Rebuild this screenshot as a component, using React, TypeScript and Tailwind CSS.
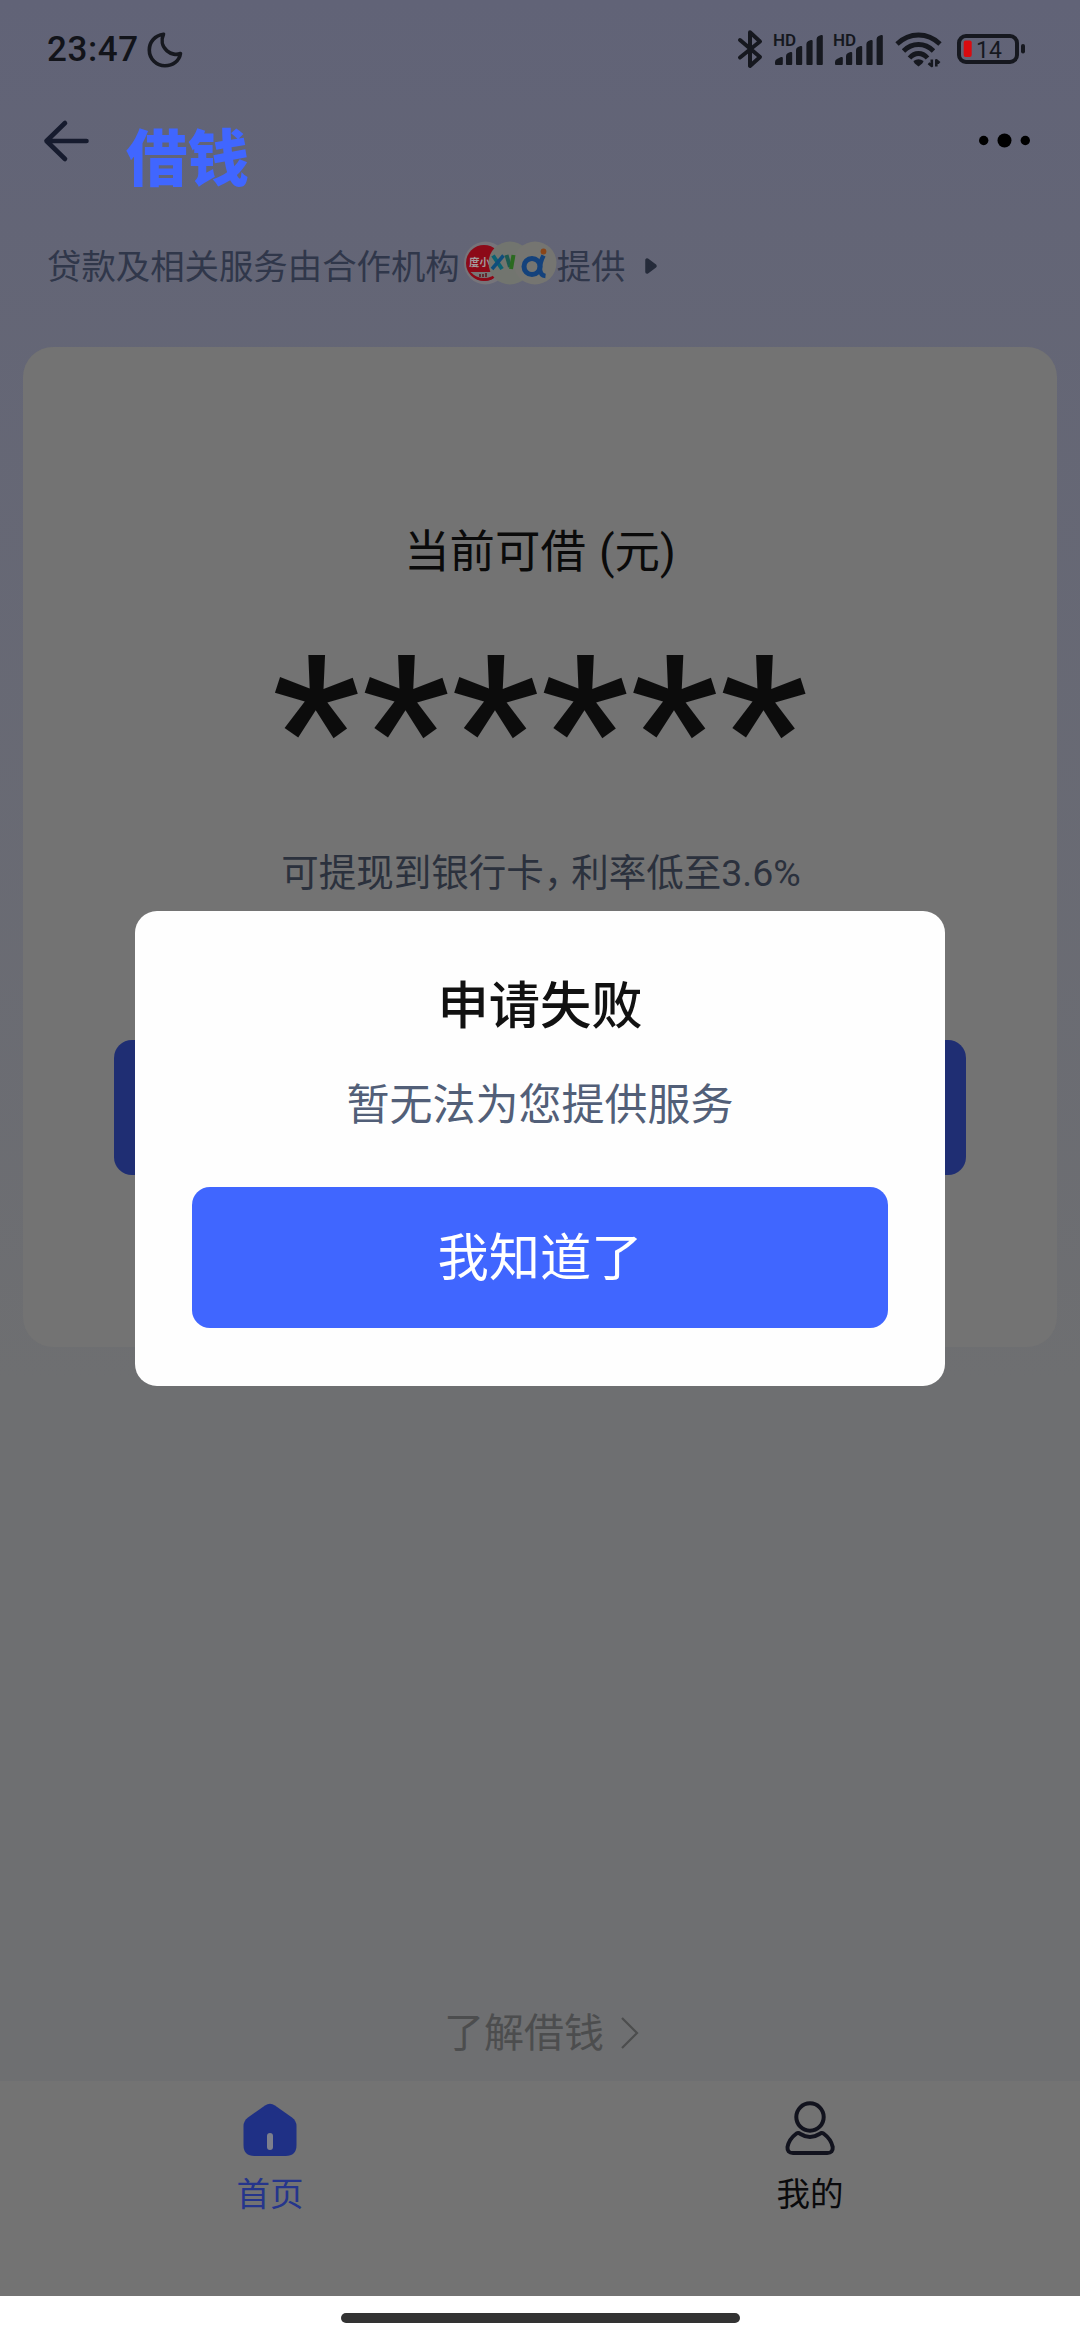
import React from "react";

const cjk = "font-['Roboto','Noto_Sans_CJK_SC',sans-serif]";

function SignalIcon() {
  return (
    <svg width="50" height="36" viewBox="0 0 50 36" fill="#16181f">
      <path d="M2 33v-2q0-2 2-3l4-2q1.800-.5 1.800 1v6q0 1-1 1H3q-1 0-1-1z" />
      <path d="M13 33v-8q0-2 2-3l2.500-1q1.700-.5 1.700 1v11q0 1-1 1H14q-1 0-1-1z" />
      <path d="M23 33v-14q0-2 2-3l2.500-1q1.700-.5 1.700 1v17q0 1-1 1H24q-1 0-1-1z" />
      <path d="M33.400 33v-20q0-2 2-3l2.500-1q1.700-.5 1.700 1v23q0 1-1 1h-4.200q-1 0-1-1z" />
      <path d="M43.600 33v-25q0-2 2-3l2.500-1q1.700-.5 1.700 1v28q0 1-1 1h-4.200q-1 0-1-1z" />
    </svg>
  );
}

function Signal() {
  return (
    <div className="relative w-[50px] h-[36px]">
      <SignalIcon />
      <span className="absolute left-0 top-[1px] font-['Roboto'] text-[17px] leading-[16px] font-semibold text-[#16181f]">
        HD
      </span>
    </div>
  );
}

function StatusBar() {
  return (
    <div className="flex h-[100px] items-start justify-between pl-[47px] pr-[54px]">
      <div className="flex items-start">
        <span className="mt-[29px] font-['Roboto'] text-[35px] leading-[41px] font-medium text-[#12141a] tracking-[0.6px]">
          23:47
        </span>
        <svg
          className="ml-[7px] mt-[30px]"
          width="38"
          height="38"
          viewBox="0 0 38 38"
          fill="none"
          stroke="#16181f"
          strokeWidth="3.6"
          strokeLinejoin="round"
        >
          <path d="M17.500 4.200C9 5.200 3.300 12 3.300 20c0 9 7.200 15.800 15.700 15.800 8 0 14.300-5 15.500-12.300-3.800 1.600-9.500 1-13.500-2.600-5-4.500-6.200-11-3.500-16.700z" />
        </svg>
      </div>
      <div className="flex items-start pt-[29px]">
        <svg
          width="26"
          height="40"
          viewBox="0 0 26 40"
          fill="none"
          stroke="#16181f"
          strokeWidth="4"
          strokeLinejoin="round"
          strokeLinecap="round"
        >
          <path d="M3 11l20 17-10 9V3.300l10 9.200L3 28.500" />
        </svg>
        <div className="ml-[10px] mt-[2px]">
          <Signal />
        </div>
        <div className="ml-[10px] mt-[2px]">
          <Signal />
        </div>
        <svg
          className="ml-[12px] mt-[2px]"
          width="50"
          height="38"
          viewBox="0 0 50 38"
          fill="none"
          stroke="#16181f"
          strokeWidth="4.800"
        >
          <path d="M2 13Q11.500 4 23.500 4T45 13" />
          <path d="M8.500 20Q15 13.500 23.500 13.500T38.500 20" />
          <path d="M14.500 27Q18.500 22.500 23.500 22.500T32.500 27" />
          <path d="M18.500 30q5-3.500 10 0 0 2-5 5.500-5-3.500-5-5.500z" fill="#16181f" stroke="none" />
          <path
            d="M36.800 28.500v6.500l-3.300-2.700M41.300 35.500v-6.300l3.300 2.700"
            strokeWidth="2.600"
            strokeLinejoin="round"
          />
        </svg>
        <svg className="ml-[11px] mt-[4px]" width="70" height="32" viewBox="0 0 70 32">
          <rect
            x="3"
            y="3"
            width="58"
            height="26"
            rx="7"
            fill="none"
            stroke="#16181f"
            strokeWidth="4"
          />
          <rect x="7.700" y="7.500" width="8" height="16.500" rx="2" fill="#da0b10" />
          <rect x="65" y="11" width="4" height="9.500" rx="2" fill="#16181f" />
          <text x="20" y="24.500" fontFamily="Roboto" fontSize="23" fill="#16181f">
            14
          </text>
        </svg>
      </div>
    </div>
  );
}

function Header() {
  return (
    <div className="flex h-[124px] items-start">
      <svg
        className="ml-[42px] mt-[19px]"
        width="50"
        height="44"
        viewBox="0 0 50 44"
        fill="none"
        stroke="#161b2e"
        strokeWidth="4.600"
        strokeLinecap="round"
        strokeLinejoin="round"
      >
        <path d="M44.500 22H4.500M23 4L4.500 22L23 40" />
      </svg>
      <h1
        className={`${cjk} ml-[34px] mt-[27px] text-[61.500px] leading-[66px] font-black text-[#4066ff]`}
      >
        借钱
      </h1>
      <svg className="ml-auto mr-[48px] mt-[32px]" width="54" height="18" viewBox="0 0 54 18">
        <circle cx="5.700" cy="8.500" r="4.700" />
        <circle cx="26.500" cy="8.500" r="7" />
        <circle cx="47.300" cy="8.500" r="4.700" />
      </svg>
    </div>
  );
}

function Providers() {
  return (
    <div
      className={`${cjk} flex h-[84px] items-center pl-[47px] pt-[2px] text-[34.400px] leading-[82px] text-[#30374a] whitespace-nowrap`}
    >
      贷款及相关服务由合作机构
      <svg className="ml-[3px] mb-[8px]" width="94" height="46" viewBox="0 0 94 46">
        <circle cx="22.500" cy="23" r="21.500" fill="#76747a" />
        <circle cx="21" cy="23" r="18" fill="#8c0a18" />
        <path d="M7.500 32h27a18 18 0 0 1-27 0z" fill="#777" />
        <path d="M8 33.500a18 18 0 0 0 22 4.500" fill="none" stroke="#8c0a18" strokeWidth="1.500" />
        <path d="M17 37v-3M20 37v-3M23 37v-4" stroke="#601018" strokeWidth="1.500" />
        <text
          x="6"
          y="25.500"
          fontFamily="Noto Sans CJK SC"
          fontSize="10.500"
          fontWeight="700"
          fill="#a39a9c"
        >
          度小
        </text>
        <circle cx="47" cy="23" r="21.500" fill="#72756f" />
        <circle cx="72" cy="23" r="21.500" fill="#757571" />
        <path d="M30 15.500l9 13.500" stroke="#0b6272" strokeWidth="4" />
        <path d="M40.500 15.500L29 29" stroke="#0f4d7c" strokeWidth="3.500" />
        <path d="M43.500 15l3.500 12" stroke="#1d5a50" strokeWidth="4" />
        <path d="M50.500 15l-2.500 14" stroke="#2b6a20" strokeWidth="4" />
        <circle cx="69" cy="26.500" r="8" fill="none" stroke="#14427c" strokeWidth="5" />
        <path
          d="M80.500 15.500q-4 8-3.500 14t5.500 6.500"
          fill="none"
          stroke="#14427c"
          strokeWidth="4.500"
        />
        <circle cx="80.500" cy="11.500" r="2.900" fill="#8a4518" />
      </svg>
      提供
      <svg className="ml-[17px] mb-[2px]" width="16" height="20" viewBox="0 0 16 20">
        <path
          d="M4 4v12l8-6z"
          fill="#252b3a"
          stroke="#252b3a"
          strokeWidth="3.500"
          strokeLinejoin="round"
        />
      </svg>
    </div>
  );
}

function LoanCard() {
  return (
    <div
      className={`${cjk} mx-[23px] mt-[39px] flex h-[1000px] flex-col items-center rounded-[30px] bg-[#737373]`}
    >
      <p className="mt-[173px] text-[45.400px] leading-[66px] text-[#0a0a0a] [word-spacing:2px]">
        当前可借 (元)
      </p>
      <p className="mt-[26px] pl-[2px] text-[197px] leading-[231px] font-medium tracking-[2.200px] text-[#0c0c0c]">
        ******
      </p>
      <p className="mt-[2px] pl-[2px] text-[37.500px] leading-[56px] text-[#2b313d] whitespace-nowrap">
        可提现到银行卡<span className="tracking-[-10px]">，</span>利率低至3.6%
      </p>
      <div className="mt-[139px] h-[135px] w-[852px] rounded-[18px] bg-[#1f2e73]"></div>
    </div>
  );
}

function TabBar() {
  return (
    <div
      className={`${cjk} grid h-[215px] grid-cols-2 bg-[#737373] text-[33.500px] leading-[40px]`}
    >
      <div className="flex flex-col items-center pt-[19px] text-[#25358c]">
        <svg width="60" height="60" viewBox="0 0 60 60">
          <path
            d="M25 5.500q5-3.500 10 0l17 12q4.500 3.500 4.500 8.500v19q0 11-11 11H14.500q-11 0-11-11V26q0-5 4.500-8.500z"
            fill="#1f3085"
          />
          <rect x="27" y="33" width="6" height="17" rx="3" fill="#7d7f8c" />
        </svg>
        <p className="mt-[15px]">首页</p>
      </div>
      <div className="flex flex-col items-center pt-[19px] text-[#0a0a0c]">
        <svg
          width="60"
          height="60"
          viewBox="0 0 60 60"
          fill="none"
          stroke="#12131e"
          strokeWidth="4"
          strokeLinejoin="round"
        >
          <circle cx="30" cy="17" r="13.700" />
          <path d="M16.500 33.500q2-1 4 .5Q30 40 39.500 34q2-1.500 4-.5Q51 39 52.700 47q.5 6-5.500 6H13q-6 0-5.500-6Q9 39 16.500 33.500z" />
        </svg>
        <p className="mt-[15px]">我的</p>
      </div>
    </div>
  );
}

function FailModal() {
  return (
    <div className="absolute inset-x-0 top-[911px] flex justify-center">
      <div
        className={`${cjk} flex h-[475px] w-[810px] flex-col items-center rounded-[22px] bg-[#fefefe]`}
      >
        <h2 className="mt-[59px] text-[51.300px] leading-[74px] font-medium text-[#111]">
          申请失败
        </h2>
        <p className="mt-[29px] text-[43px] leading-[64px] text-[#525f78]">暂无法为您提供服务</p>
        <button className="mt-[50px] h-[141px] w-[696px] rounded-[18px] bg-[#4066ff] pt-[3px] text-[51.300px] text-white">
          我知道了
        </button>
      </div>
    </div>
  );
}

export default function App() {
  return (
    <div className="relative flex h-[2340px] w-[1080px] flex-col overflow-hidden bg-white">
      <div className="flex h-[2296px] flex-col bg-linear-to-b from-[#616377] from-0% via-[#6e6f71] via-60% to-[#6e6f71] to-100%">
        <StatusBar />
        <Header />
        <Providers />
        <LoanCard />
        <div
          className={`${cjk} mt-auto mb-[14px] flex items-center justify-center pl-[4px] text-[40px] leading-[66px] text-[#4c4d4e]`}
        >
          了解借钱
          <svg
            className="ml-[16px] mb-[2px]"
            width="20"
            height="34"
            viewBox="0 0 20 34"
            fill="none"
            stroke="#4c4d4e"
            strokeWidth="2.200"
          >
            <path d="M2 2L17 17L2 32" />
          </svg>
        </div>
        <TabBar />
      </div>
      <div className="flex flex-1 justify-center pt-[17px]">
        <div className="h-[10px] w-[399px] rounded-full bg-[#333]"></div>
      </div>
      <FailModal />
    </div>
  );
}
